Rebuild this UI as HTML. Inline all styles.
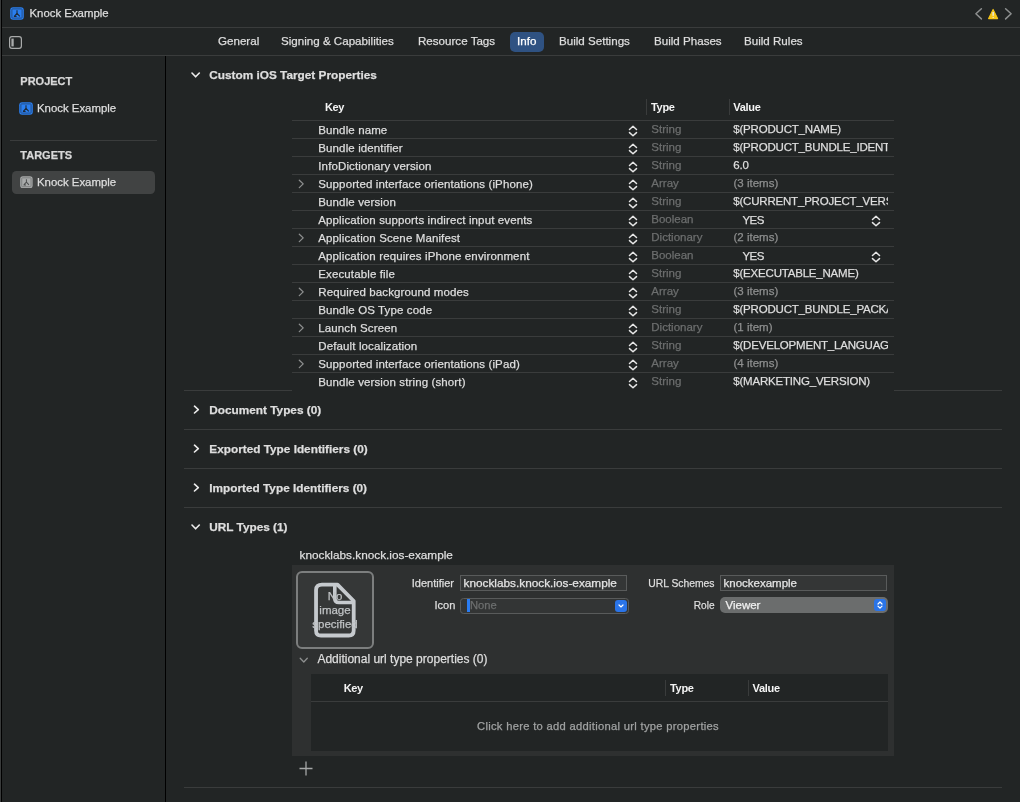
<!DOCTYPE html>
<html><head><meta charset="utf-8"><title>Knock Example - Info</title>
<style>
html,body{margin:0;padding:0;}
body{width:1020px;height:802px;overflow:hidden;background:#222525;position:relative;font-family:"Liberation Sans",sans-serif;color:#dedede;-webkit-font-smoothing:antialiased;}
.t{position:absolute;white-space:nowrap;}
.r{position:absolute;}
.clip{position:absolute;overflow:hidden;}
#root{position:absolute;left:0;top:0;width:1020px;height:802px;will-change:transform;}
.t{-webkit-text-stroke:0.25px currentColor;}
</style></head><body>
<div id="root">
<div class="r" style="left:0px;top:0px;width:1px;height:802px;background:#393b3b;"></div>
<div class="r" style="left:1px;top:0px;width:1px;height:802px;background:#000;"></div>
<svg class="r" style="left:10px;top:7px" width="14" height="13" viewBox="0 0 14 13" preserveAspectRatio="none"><rect x="0.2" y="0.2" width="13.6" height="12.6" rx="3" fill="#2a7ff0"/><rect x="1.9" y="1.9" width="10.2" height="9.2" rx="0.6" fill="none" stroke="#24508a" stroke-width="1"/><path d="M7 3.3 L7 6.3 M7 6.3 L4.2 9.3 M7 6.3 L9.8 9.3 M3.9 9.4 L6.6 9.4" fill="none" stroke="#1d2a3a" stroke-width="1.1"/></svg>
<div class="t " style="left:29.5px;top:2.6999999999999993px;font-size:11.4px;line-height:20px;color:#dedede;">Knock Example</div>
<div class="r" style="left:2px;top:27px;width:1018px;height:1px;background:#3a3c3c;"></div>
<svg class="r" style="left:974px;top:7px" width="40" height="14" viewBox="0 0 40 14"><path d="M7.4 1.7 L1.9 6.8 L7.4 11.9" fill="none" stroke="#8e9090" stroke-width="1.5" stroke-linecap="round" stroke-linejoin="round"/><path d="M14.6 11.6 L19.1 2.4 L23.6 11.6 Z" fill="#f5c518" stroke="#f5c518" stroke-width="1.1" stroke-linejoin="round"/><rect x="18.5" y="5" width="1.3" height="3.8" fill="#e8eef8"/><rect x="18.6" y="9.9" width="1.1" height="1.1" fill="#e8eef8"/><path d="M31.6 1.7 L37.1 6.8 L31.6 11.9" fill="none" stroke="#8e9090" stroke-width="1.5" stroke-linecap="round" stroke-linejoin="round"/></svg>
<svg class="r" style="left:9px;top:36px" width="13" height="13" viewBox="0 0 13 13"><rect x="0.6" y="0.6" width="11.8" height="11.8" rx="2.3" fill="none" stroke="#a9abab" stroke-width="1.2"/><rect x="2.4" y="2.6" width="2.3" height="7.8" fill="#a9abab"/></svg>
<div class="r" style="left:510px;top:32px;width:34px;height:20px;background:#2f5282;border-radius:5px;"></div>
<div class="t " style="left:218px;top:31.200000000000003px;font-size:11.6px;line-height:20px;color:#dedede;">General</div>
<div class="t " style="left:281px;top:31.200000000000003px;font-size:11.6px;line-height:20px;color:#dedede;">Signing &amp; Capabilities</div>
<div class="t " style="left:418px;top:31.200000000000003px;font-size:11.6px;line-height:20px;color:#dedede;">Resource Tags</div>
<div class="t " style="left:517px;top:31.200000000000003px;font-size:11.6px;line-height:20px;color:#ffffff;">Info</div>
<div class="t " style="left:559px;top:31.200000000000003px;font-size:11.6px;line-height:20px;color:#dedede;">Build Settings</div>
<div class="t " style="left:654px;top:31.200000000000003px;font-size:11.6px;line-height:20px;color:#dedede;">Build Phases</div>
<div class="t " style="left:744px;top:31.200000000000003px;font-size:11.6px;line-height:20px;color:#dedede;">Build Rules</div>
<div class="r" style="left:2px;top:55px;width:1018px;height:1px;background:#3a3c3c;"></div>
<div class="r" style="left:165px;top:56px;width:1px;height:746px;background:#000;"></div>
<div class="t " style="left:20.3px;top:71.3px;font-size:11px;line-height:20px;color:#d8d8d8;font-weight:700;">PROJECT</div>
<svg class="r" style="left:19px;top:102px" width="14" height="13" viewBox="0 0 14 13" preserveAspectRatio="none"><rect x="0.2" y="0.2" width="13.6" height="12.6" rx="3" fill="#2a7ff0"/><rect x="1.9" y="1.9" width="10.2" height="9.2" rx="0.6" fill="none" stroke="#24508a" stroke-width="1"/><path d="M7 3.3 L7 6.3 M7 6.3 L4.2 9.3 M7 6.3 L9.8 9.3 M3.9 9.4 L6.6 9.4" fill="none" stroke="#1d2a3a" stroke-width="1.1"/></svg>
<div class="t " style="left:37px;top:98.4px;font-size:11.4px;line-height:20px;color:#dedede;">Knock Example</div>
<div class="r" style="left:10px;top:140px;width:147px;height:1px;background:#3a3c3c;"></div>
<div class="t " style="left:20.3px;top:145.1px;font-size:11px;line-height:20px;color:#d8d8d8;font-weight:700;">TARGETS</div>
<div class="r" style="left:12px;top:171px;width:143px;height:23px;background:#414343;border-radius:4.5px;"></div>
<svg class="r" style="left:20px;top:175.8px" width="12.8" height="12.5" viewBox="0 0 14 13" preserveAspectRatio="none"><rect x="0.2" y="0.2" width="13.6" height="12.6" rx="3" fill="#a9abab"/><rect x="1.9" y="1.9" width="10.2" height="9.2" rx="0.6" fill="none" stroke="#7c7e7e" stroke-width="1"/><path d="M7 3.3 L7 6.3 M7 6.3 L4.2 9.3 M7 6.3 L9.8 9.3 M3.9 9.4 L6.6 9.4" fill="none" stroke="#4c4e4e" stroke-width="1.1"/></svg>
<div class="t " style="left:37px;top:172.4px;font-size:11.4px;line-height:20px;color:#dedede;">Knock Example</div>
<svg class="r" style="left:191px;top:72px" width="10" height="7" viewBox="0 0 10 7"><path d="M1 1 L4.6 4.8 L8.3 1" fill="none" stroke="#ececec" stroke-width="1.6" stroke-linecap="round" stroke-linejoin="round"/></svg>
<div class="t " style="left:209.3px;top:65.2px;font-size:11.8px;line-height:20px;color:#dedede;font-weight:700;">Custom iOS Target Properties</div>
<div class="t " style="left:325px;top:96.6px;font-size:11px;line-height:20px;color:#f4f4f4;font-weight:700;letter-spacing:-0.4px;-webkit-text-stroke:0;">Key</div>
<div class="r" style="left:646px;top:99px;width:1px;height:16px;background:#3a3c3c;"></div>
<div class="t " style="left:651px;top:96.6px;font-size:11px;line-height:20px;color:#f4f4f4;font-weight:700;letter-spacing:-0.3px;-webkit-text-stroke:0;">Type</div>
<div class="r" style="left:729px;top:99px;width:1px;height:16px;background:#3a3c3c;"></div>
<div class="t " style="left:733.3px;top:96.6px;font-size:11px;line-height:20px;color:#f4f4f4;font-weight:700;letter-spacing:-0.3px;-webkit-text-stroke:0;">Value</div>
<div class="r" style="left:292px;top:120px;width:602px;height:1px;background:#3a3c3c;"></div>
<div class="t " style="left:318.3px;top:119.80000000000001px;font-size:11.5px;line-height:20px;color:#dedede;letter-spacing:0.12px;">Bundle name</div>
<svg class="r" style="left:628px;top:124px" width="10" height="14" viewBox="0 0 10 14"><path d="M1.5 5.5 L5 2.3 L8.5 5.5 M1.5 8.6 L5 11.7 L8.5 8.6" fill="none" stroke="#e6e6e6" stroke-width="1.5" stroke-linecap="round" stroke-linejoin="round"/></svg>
<div class="t " style="left:651.3px;top:118.80000000000001px;font-size:11.5px;line-height:20px;color:#6c6e6e;">String</div>
<div class="clip" style="left:733px;top:120px;width:155px;height:18px;">
<div class="t " style="left:0.3px;top:-1.1999999999999993px;font-size:11.5px;line-height:20px;color:#dedede;letter-spacing:-0.2px;white-space:nowrap;">$(PRODUCT_NAME)</div>
</div>
<div class="r" style="left:292px;top:138px;width:602px;height:1px;background:#3a3c3c;"></div>
<div class="t " style="left:318.3px;top:137.8px;font-size:11.5px;line-height:20px;color:#dedede;letter-spacing:0.12px;">Bundle identifier</div>
<svg class="r" style="left:628px;top:142px" width="10" height="14" viewBox="0 0 10 14"><path d="M1.5 5.5 L5 2.3 L8.5 5.5 M1.5 8.6 L5 11.7 L8.5 8.6" fill="none" stroke="#e6e6e6" stroke-width="1.5" stroke-linecap="round" stroke-linejoin="round"/></svg>
<div class="t " style="left:651.3px;top:136.8px;font-size:11.5px;line-height:20px;color:#6c6e6e;">String</div>
<div class="clip" style="left:733px;top:138px;width:155px;height:18px;">
<div class="t " style="left:0.3px;top:-1.1999999999999993px;font-size:11.5px;line-height:20px;color:#dedede;letter-spacing:-0.2px;white-space:nowrap;">$(PRODUCT_BUNDLE_IDENTIFIER)</div>
</div>
<div class="r" style="left:292px;top:156px;width:602px;height:1px;background:#3a3c3c;"></div>
<div class="t " style="left:318.3px;top:155.8px;font-size:11.5px;line-height:20px;color:#dedede;letter-spacing:0.12px;">InfoDictionary version</div>
<svg class="r" style="left:628px;top:160px" width="10" height="14" viewBox="0 0 10 14"><path d="M1.5 5.5 L5 2.3 L8.5 5.5 M1.5 8.6 L5 11.7 L8.5 8.6" fill="none" stroke="#e6e6e6" stroke-width="1.5" stroke-linecap="round" stroke-linejoin="round"/></svg>
<div class="t " style="left:651.3px;top:154.8px;font-size:11.5px;line-height:20px;color:#6c6e6e;">String</div>
<div class="clip" style="left:733px;top:156px;width:155px;height:18px;">
<div class="t " style="left:0.3px;top:-1.1999999999999993px;font-size:11.5px;line-height:20px;color:#dedede;letter-spacing:-0.2px;white-space:nowrap;">6.0</div>
</div>
<div class="r" style="left:292px;top:174px;width:602px;height:1px;background:#3a3c3c;"></div>
<svg class="r" style="left:298px;top:178.5px" width="7" height="10" viewBox="0 0 7 10"><path d="M1.3 1.2 L5.2 4.9 L1.3 8.6" fill="none" stroke="#8d8f8f" stroke-width="1.3" stroke-linecap="round" stroke-linejoin="round"/></svg>
<div class="t " style="left:318.3px;top:173.8px;font-size:11.5px;line-height:20px;color:#dedede;letter-spacing:0.12px;">Supported interface orientations (iPhone)</div>
<svg class="r" style="left:628px;top:178px" width="10" height="14" viewBox="0 0 10 14"><path d="M1.5 5.5 L5 2.3 L8.5 5.5 M1.5 8.6 L5 11.7 L8.5 8.6" fill="none" stroke="#e6e6e6" stroke-width="1.5" stroke-linecap="round" stroke-linejoin="round"/></svg>
<div class="t " style="left:651.3px;top:172.8px;font-size:11.5px;line-height:20px;color:#6c6e6e;">Array</div>
<div class="t " style="left:733.5px;top:172.8px;font-size:11.5px;line-height:20px;color:#8e8f8f;">(3 items)</div>
<div class="r" style="left:292px;top:192px;width:602px;height:1px;background:#3a3c3c;"></div>
<div class="t " style="left:318.3px;top:191.8px;font-size:11.5px;line-height:20px;color:#dedede;letter-spacing:0.12px;">Bundle version</div>
<svg class="r" style="left:628px;top:196px" width="10" height="14" viewBox="0 0 10 14"><path d="M1.5 5.5 L5 2.3 L8.5 5.5 M1.5 8.6 L5 11.7 L8.5 8.6" fill="none" stroke="#e6e6e6" stroke-width="1.5" stroke-linecap="round" stroke-linejoin="round"/></svg>
<div class="t " style="left:651.3px;top:190.8px;font-size:11.5px;line-height:20px;color:#6c6e6e;">String</div>
<div class="clip" style="left:733px;top:192px;width:155px;height:18px;">
<div class="t " style="left:0.3px;top:-1.1999999999999993px;font-size:11.5px;line-height:20px;color:#dedede;letter-spacing:-0.2px;white-space:nowrap;">$(CURRENT_PROJECT_VERSION)</div>
</div>
<div class="r" style="left:292px;top:210px;width:602px;height:1px;background:#3a3c3c;"></div>
<div class="t " style="left:318.3px;top:209.8px;font-size:11.5px;line-height:20px;color:#dedede;letter-spacing:0.12px;">Application supports indirect input events</div>
<svg class="r" style="left:628px;top:214px" width="10" height="14" viewBox="0 0 10 14"><path d="M1.5 5.5 L5 2.3 L8.5 5.5 M1.5 8.6 L5 11.7 L8.5 8.6" fill="none" stroke="#e6e6e6" stroke-width="1.5" stroke-linecap="round" stroke-linejoin="round"/></svg>
<div class="t " style="left:651.3px;top:208.8px;font-size:11.5px;line-height:20px;color:#6c6e6e;">Boolean</div>
<div class="t " style="left:742.5px;top:210.20000000000002px;font-size:11.5px;line-height:20px;color:#dedede;letter-spacing:-0.6px;">YES</div>
<svg class="r" style="left:871px;top:214px" width="10" height="14" viewBox="0 0 10 14"><path d="M1.5 5.5 L5 2.3 L8.5 5.5 M1.5 8.6 L5 11.7 L8.5 8.6" fill="none" stroke="#e6e6e6" stroke-width="1.5" stroke-linecap="round" stroke-linejoin="round"/></svg>
<div class="r" style="left:292px;top:228px;width:602px;height:1px;background:#3a3c3c;"></div>
<svg class="r" style="left:298px;top:232.5px" width="7" height="10" viewBox="0 0 7 10"><path d="M1.3 1.2 L5.2 4.9 L1.3 8.6" fill="none" stroke="#8d8f8f" stroke-width="1.3" stroke-linecap="round" stroke-linejoin="round"/></svg>
<div class="t " style="left:318.3px;top:227.8px;font-size:11.5px;line-height:20px;color:#dedede;letter-spacing:0.12px;">Application Scene Manifest</div>
<svg class="r" style="left:628px;top:232px" width="10" height="14" viewBox="0 0 10 14"><path d="M1.5 5.5 L5 2.3 L8.5 5.5 M1.5 8.6 L5 11.7 L8.5 8.6" fill="none" stroke="#e6e6e6" stroke-width="1.5" stroke-linecap="round" stroke-linejoin="round"/></svg>
<div class="t " style="left:651.3px;top:226.8px;font-size:11.5px;line-height:20px;color:#6c6e6e;">Dictionary</div>
<div class="t " style="left:733.5px;top:226.8px;font-size:11.5px;line-height:20px;color:#8e8f8f;">(2 items)</div>
<div class="r" style="left:292px;top:246px;width:602px;height:1px;background:#3a3c3c;"></div>
<div class="t " style="left:318.3px;top:245.8px;font-size:11.5px;line-height:20px;color:#dedede;letter-spacing:0.12px;">Application requires iPhone environment</div>
<svg class="r" style="left:628px;top:250px" width="10" height="14" viewBox="0 0 10 14"><path d="M1.5 5.5 L5 2.3 L8.5 5.5 M1.5 8.6 L5 11.7 L8.5 8.6" fill="none" stroke="#e6e6e6" stroke-width="1.5" stroke-linecap="round" stroke-linejoin="round"/></svg>
<div class="t " style="left:651.3px;top:244.8px;font-size:11.5px;line-height:20px;color:#6c6e6e;">Boolean</div>
<div class="t " style="left:742.5px;top:246.2px;font-size:11.5px;line-height:20px;color:#dedede;letter-spacing:-0.6px;">YES</div>
<svg class="r" style="left:871px;top:250px" width="10" height="14" viewBox="0 0 10 14"><path d="M1.5 5.5 L5 2.3 L8.5 5.5 M1.5 8.6 L5 11.7 L8.5 8.6" fill="none" stroke="#e6e6e6" stroke-width="1.5" stroke-linecap="round" stroke-linejoin="round"/></svg>
<div class="r" style="left:292px;top:264px;width:602px;height:1px;background:#3a3c3c;"></div>
<div class="t " style="left:318.3px;top:263.8px;font-size:11.5px;line-height:20px;color:#dedede;letter-spacing:0.12px;">Executable file</div>
<svg class="r" style="left:628px;top:268px" width="10" height="14" viewBox="0 0 10 14"><path d="M1.5 5.5 L5 2.3 L8.5 5.5 M1.5 8.6 L5 11.7 L8.5 8.6" fill="none" stroke="#e6e6e6" stroke-width="1.5" stroke-linecap="round" stroke-linejoin="round"/></svg>
<div class="t " style="left:651.3px;top:262.8px;font-size:11.5px;line-height:20px;color:#6c6e6e;">String</div>
<div class="clip" style="left:733px;top:264px;width:155px;height:18px;">
<div class="t " style="left:0.3px;top:-1.1999999999999993px;font-size:11.5px;line-height:20px;color:#dedede;letter-spacing:-0.2px;white-space:nowrap;">$(EXECUTABLE_NAME)</div>
</div>
<div class="r" style="left:292px;top:282px;width:602px;height:1px;background:#3a3c3c;"></div>
<svg class="r" style="left:298px;top:286.5px" width="7" height="10" viewBox="0 0 7 10"><path d="M1.3 1.2 L5.2 4.9 L1.3 8.6" fill="none" stroke="#8d8f8f" stroke-width="1.3" stroke-linecap="round" stroke-linejoin="round"/></svg>
<div class="t " style="left:318.3px;top:281.8px;font-size:11.5px;line-height:20px;color:#dedede;letter-spacing:0.12px;">Required background modes</div>
<svg class="r" style="left:628px;top:286px" width="10" height="14" viewBox="0 0 10 14"><path d="M1.5 5.5 L5 2.3 L8.5 5.5 M1.5 8.6 L5 11.7 L8.5 8.6" fill="none" stroke="#e6e6e6" stroke-width="1.5" stroke-linecap="round" stroke-linejoin="round"/></svg>
<div class="t " style="left:651.3px;top:280.8px;font-size:11.5px;line-height:20px;color:#6c6e6e;">Array</div>
<div class="t " style="left:733.5px;top:280.8px;font-size:11.5px;line-height:20px;color:#8e8f8f;">(3 items)</div>
<div class="r" style="left:292px;top:300px;width:602px;height:1px;background:#3a3c3c;"></div>
<div class="t " style="left:318.3px;top:299.8px;font-size:11.5px;line-height:20px;color:#dedede;letter-spacing:0.12px;">Bundle OS Type code</div>
<svg class="r" style="left:628px;top:304px" width="10" height="14" viewBox="0 0 10 14"><path d="M1.5 5.5 L5 2.3 L8.5 5.5 M1.5 8.6 L5 11.7 L8.5 8.6" fill="none" stroke="#e6e6e6" stroke-width="1.5" stroke-linecap="round" stroke-linejoin="round"/></svg>
<div class="t " style="left:651.3px;top:298.8px;font-size:11.5px;line-height:20px;color:#6c6e6e;">String</div>
<div class="clip" style="left:733px;top:300px;width:155px;height:18px;">
<div class="t " style="left:0.3px;top:-1.1999999999999993px;font-size:11.5px;line-height:20px;color:#dedede;letter-spacing:-0.2px;white-space:nowrap;">$(PRODUCT_BUNDLE_PACKAGE_TYPE)</div>
</div>
<div class="r" style="left:292px;top:318px;width:602px;height:1px;background:#3a3c3c;"></div>
<svg class="r" style="left:298px;top:322.5px" width="7" height="10" viewBox="0 0 7 10"><path d="M1.3 1.2 L5.2 4.9 L1.3 8.6" fill="none" stroke="#8d8f8f" stroke-width="1.3" stroke-linecap="round" stroke-linejoin="round"/></svg>
<div class="t " style="left:318.3px;top:317.8px;font-size:11.5px;line-height:20px;color:#dedede;letter-spacing:0.12px;">Launch Screen</div>
<svg class="r" style="left:628px;top:322px" width="10" height="14" viewBox="0 0 10 14"><path d="M1.5 5.5 L5 2.3 L8.5 5.5 M1.5 8.6 L5 11.7 L8.5 8.6" fill="none" stroke="#e6e6e6" stroke-width="1.5" stroke-linecap="round" stroke-linejoin="round"/></svg>
<div class="t " style="left:651.3px;top:316.8px;font-size:11.5px;line-height:20px;color:#6c6e6e;">Dictionary</div>
<div class="t " style="left:733.5px;top:316.8px;font-size:11.5px;line-height:20px;color:#8e8f8f;">(1 item)</div>
<div class="r" style="left:292px;top:336px;width:602px;height:1px;background:#3a3c3c;"></div>
<div class="t " style="left:318.3px;top:335.8px;font-size:11.5px;line-height:20px;color:#dedede;letter-spacing:0.12px;">Default localization</div>
<svg class="r" style="left:628px;top:340px" width="10" height="14" viewBox="0 0 10 14"><path d="M1.5 5.5 L5 2.3 L8.5 5.5 M1.5 8.6 L5 11.7 L8.5 8.6" fill="none" stroke="#e6e6e6" stroke-width="1.5" stroke-linecap="round" stroke-linejoin="round"/></svg>
<div class="t " style="left:651.3px;top:334.8px;font-size:11.5px;line-height:20px;color:#6c6e6e;">String</div>
<div class="clip" style="left:733px;top:336px;width:155px;height:18px;">
<div class="t " style="left:0.3px;top:-1.1999999999999993px;font-size:11.5px;line-height:20px;color:#dedede;letter-spacing:-0.2px;white-space:nowrap;">$(DEVELOPMENT_LANGUAGE)</div>
</div>
<div class="r" style="left:292px;top:354px;width:602px;height:1px;background:#3a3c3c;"></div>
<svg class="r" style="left:298px;top:358.5px" width="7" height="10" viewBox="0 0 7 10"><path d="M1.3 1.2 L5.2 4.9 L1.3 8.6" fill="none" stroke="#8d8f8f" stroke-width="1.3" stroke-linecap="round" stroke-linejoin="round"/></svg>
<div class="t " style="left:318.3px;top:353.8px;font-size:11.5px;line-height:20px;color:#dedede;letter-spacing:0.12px;">Supported interface orientations (iPad)</div>
<svg class="r" style="left:628px;top:358px" width="10" height="14" viewBox="0 0 10 14"><path d="M1.5 5.5 L5 2.3 L8.5 5.5 M1.5 8.6 L5 11.7 L8.5 8.6" fill="none" stroke="#e6e6e6" stroke-width="1.5" stroke-linecap="round" stroke-linejoin="round"/></svg>
<div class="t " style="left:651.3px;top:352.8px;font-size:11.5px;line-height:20px;color:#6c6e6e;">Array</div>
<div class="t " style="left:733.5px;top:352.8px;font-size:11.5px;line-height:20px;color:#8e8f8f;">(4 items)</div>
<div class="r" style="left:292px;top:372px;width:602px;height:1px;background:#3a3c3c;"></div>
<div class="t " style="left:318.3px;top:371.8px;font-size:11.5px;line-height:20px;color:#dedede;letter-spacing:0.12px;">Bundle version string (short)</div>
<svg class="r" style="left:628px;top:376px" width="10" height="14" viewBox="0 0 10 14"><path d="M1.5 5.5 L5 2.3 L8.5 5.5 M1.5 8.6 L5 11.7 L8.5 8.6" fill="none" stroke="#e6e6e6" stroke-width="1.5" stroke-linecap="round" stroke-linejoin="round"/></svg>
<div class="t " style="left:651.3px;top:370.8px;font-size:11.5px;line-height:20px;color:#6c6e6e;">String</div>
<div class="clip" style="left:733px;top:372px;width:155px;height:18px;">
<div class="t " style="left:0.3px;top:-1.1999999999999993px;font-size:11.5px;line-height:20px;color:#dedede;letter-spacing:-0.2px;white-space:nowrap;">$(MARKETING_VERSION)</div>
</div>
<div class="r" style="left:184px;top:390px;width:108px;height:1px;background:#3a3c3c;"></div>
<div class="r" style="left:894px;top:390px;width:108px;height:1px;background:#3a3c3c;"></div>
<svg class="r" style="left:193px;top:405px" width="7" height="9" viewBox="0 0 7 9"><path d="M1.5 1.2 L5.3 4.6 L1.5 8" fill="none" stroke="#ececec" stroke-width="1.6" stroke-linecap="round" stroke-linejoin="round"/></svg>
<div class="t " style="left:209.3px;top:400.4px;font-size:11.8px;line-height:20px;color:#dedede;font-weight:700;">Document Types (0)</div>
<div class="r" style="left:184px;top:429px;width:818px;height:1px;background:#3a3c3c;"></div>
<svg class="r" style="left:193px;top:444px" width="7" height="9" viewBox="0 0 7 9"><path d="M1.5 1.2 L5.3 4.6 L1.5 8" fill="none" stroke="#ececec" stroke-width="1.6" stroke-linecap="round" stroke-linejoin="round"/></svg>
<div class="t " style="left:209.3px;top:439.4px;font-size:11.8px;line-height:20px;color:#dedede;font-weight:700;">Exported Type Identifiers (0)</div>
<div class="r" style="left:184px;top:468px;width:818px;height:1px;background:#3a3c3c;"></div>
<svg class="r" style="left:193px;top:483px" width="7" height="9" viewBox="0 0 7 9"><path d="M1.5 1.2 L5.3 4.6 L1.5 8" fill="none" stroke="#ececec" stroke-width="1.6" stroke-linecap="round" stroke-linejoin="round"/></svg>
<div class="t " style="left:209.3px;top:478.4px;font-size:11.8px;line-height:20px;color:#dedede;font-weight:700;">Imported Type Identifiers (0)</div>
<div class="r" style="left:184px;top:507px;width:818px;height:1px;background:#3a3c3c;"></div>
<svg class="r" style="left:191px;top:524px" width="10" height="7" viewBox="0 0 10 7"><path d="M1 1 L4.6 4.8 L8.3 1" fill="none" stroke="#ececec" stroke-width="1.6" stroke-linecap="round" stroke-linejoin="round"/></svg>
<div class="t " style="left:209.3px;top:517.0px;font-size:11.8px;line-height:20px;color:#dedede;font-weight:700;">URL Types (1)</div>
<div class="t " style="left:299.5px;top:544.6px;font-size:11.8px;line-height:20px;color:#dedede;">knocklabs.knock.ios-example</div>
<div class="r" style="left:292px;top:565px;width:602px;height:191px;background:#2e3030;"></div>
<div class="r" style="left:296px;top:571px;width:78px;height:78px;background:#353737;box-sizing:border-box;border:2px solid #7c7e7e;border-radius:6px;"></div>
<svg class="r" style="left:314px;top:582px" width="42" height="56" viewBox="0 0 42 56"><path d="M8 2.7 L23.5 2.7 L39.7 19 L39.7 48.5 Q39.7 53.5 34.7 53.5 L7 53.5 Q2.05 53.5 2.05 48.5 L2.05 8 Q2.05 2.7 8 2.7 Z" fill="none" stroke="#c6cace" stroke-width="3.8" stroke-linejoin="round"/><path d="M20.8 3 L20.8 16.5 Q20.8 20.5 24.8 20.5 L39 20.5" fill="none" stroke="#c6cace" stroke-width="3.6" stroke-linejoin="round"/></svg>
<div class="t" style="left:296px;width:78px;text-align:center;top:586px;font-size:11.5px;line-height:20px;color:#bfc2c4;">No</div>
<div class="t" style="left:296px;width:78px;text-align:center;top:600.3px;font-size:11.5px;line-height:20px;color:#bfc2c4;">image</div>
<div class="t" style="left:296px;width:78px;text-align:center;top:614px;font-size:11.5px;line-height:20px;color:#bfc2c4;">specified</div>
<div class="t " style="left:411.8px;top:572.9px;font-size:11px;line-height:20px;color:#dedede;letter-spacing:0px;">Identifier</div>
<div class="r" style="left:460px;top:575px;width:167px;height:16px;background:#343636;box-sizing:border-box;border:1px solid #595b5b;"></div>
<div class="t " style="left:463.5px;top:572.9px;font-size:11.8px;line-height:20px;color:#e4e4e4;">knocklabs.knock.ios-example</div>
<div class="t " style="left:434.5px;top:595.0px;font-size:11px;line-height:20px;color:#dedede;">Icon</div>
<div class="r" style="left:460px;top:598px;width:169px;height:16px;background:#333535;box-sizing:border-box;border:1px solid #595b5b;border-radius:3.5px;"></div>
<div class="r" style="left:467px;top:599px;width:3px;height:13px;background:#2a7cf2;"></div>
<div class="t " style="left:470px;top:595.2px;font-size:11.2px;line-height:20px;color:#6c6e6e;">None</div>
<div class="r" style="left:615px;top:600px;width:12px;height:12px;background:#2a74e8;border-radius:3px;"></div>
<svg class="r" style="left:618px;top:603px" width="6" height="6" viewBox="0 0 6 6"><path d="M1 2 L3 4 L5 2" fill="none" stroke="#fff" stroke-width="1.2" stroke-linecap="round"/></svg>
<div class="t" style="right:305.5px;top:572.8px;font-size:11px;line-height:20px;transform:scaleX(0.94);transform-origin:100% 50%;">URL Schemes</div>
<div class="r" style="left:720px;top:575px;width:167px;height:16px;background:#343636;box-sizing:border-box;border:1px solid #595b5b;"></div>
<div class="t " style="left:723.5px;top:572.9px;font-size:11.5px;line-height:20px;color:#e4e4e4;">knockexample</div>
<div class="t" style="right:305.5px;top:594.6px;font-size:11px;line-height:20px;transform:scaleX(0.92);transform-origin:100% 50%;">Role</div>
<div class="r" style="left:720px;top:597px;width:168px;height:16px;background:#6b6d6d;border-radius:5px;"></div>
<div class="t " style="left:725.5px;top:594.8px;font-size:11.5px;line-height:20px;color:#f0f0f0;">Viewer</div>
<div class="r" style="left:874px;top:599px;width:12px;height:12px;background:#2a74e8;border-radius:3px;"></div>
<svg class="r" style="left:874px;top:599px" width="12" height="12" viewBox="0 0 12 12"><path d="M4 5 L6 3 L8 5 M4 7.1 L6 9.1 L8 7.1" fill="none" stroke="#ffffff" stroke-width="1.2" stroke-linecap="round" stroke-linejoin="round"/></svg>
<svg class="r" style="left:299px;top:657px" width="10" height="7" viewBox="0 0 10 7"><path d="M1.2 1.3 L4.8 5 L8.3 1.3" fill="none" stroke="#8d8f8f" stroke-width="1.3" stroke-linecap="round" stroke-linejoin="round"/></svg>
<div class="t " style="left:317.4px;top:648.9px;font-size:12px;line-height:20px;color:#dedede;">Additional url type properties (0)</div>
<div class="r" style="left:311px;top:674px;width:577px;height:77px;background:#222525;"></div>
<div class="t " style="left:343.8px;top:677.8px;font-size:11px;line-height:20px;color:#f4f4f4;font-weight:700;letter-spacing:-0.4px;-webkit-text-stroke:0;">Key</div>
<div class="r" style="left:665px;top:680px;width:1px;height:16px;background:#3a3c3c;"></div>
<div class="t " style="left:670px;top:677.8px;font-size:11px;line-height:20px;color:#f4f4f4;font-weight:700;letter-spacing:-0.3px;-webkit-text-stroke:0;">Type</div>
<div class="r" style="left:748px;top:680px;width:1px;height:16px;background:#3a3c3c;"></div>
<div class="t " style="left:752.5px;top:677.8px;font-size:11px;line-height:20px;color:#f4f4f4;font-weight:700;letter-spacing:-0.3px;-webkit-text-stroke:0;">Value</div>
<div class="r" style="left:311px;top:701px;width:577px;height:1px;background:#3a3c3c;"></div>
<div class="t " style="left:477px;top:715.8px;font-size:11.2px;line-height:20px;color:#a0a2a2;letter-spacing:0.3px;">Click here to add additional url type properties</div>
<svg class="r" style="left:299px;top:761px" width="14" height="15" viewBox="0 0 14 15"><path d="M7 0.5 L7 14.5 M0.5 7.5 L13.5 7.5" fill="none" stroke="#a5a7a7" stroke-width="1.3"/></svg>
<div class="r" style="left:184px;top:787px;width:818px;height:1px;background:#3a3c3c;"></div>
</div>
</body></html>
